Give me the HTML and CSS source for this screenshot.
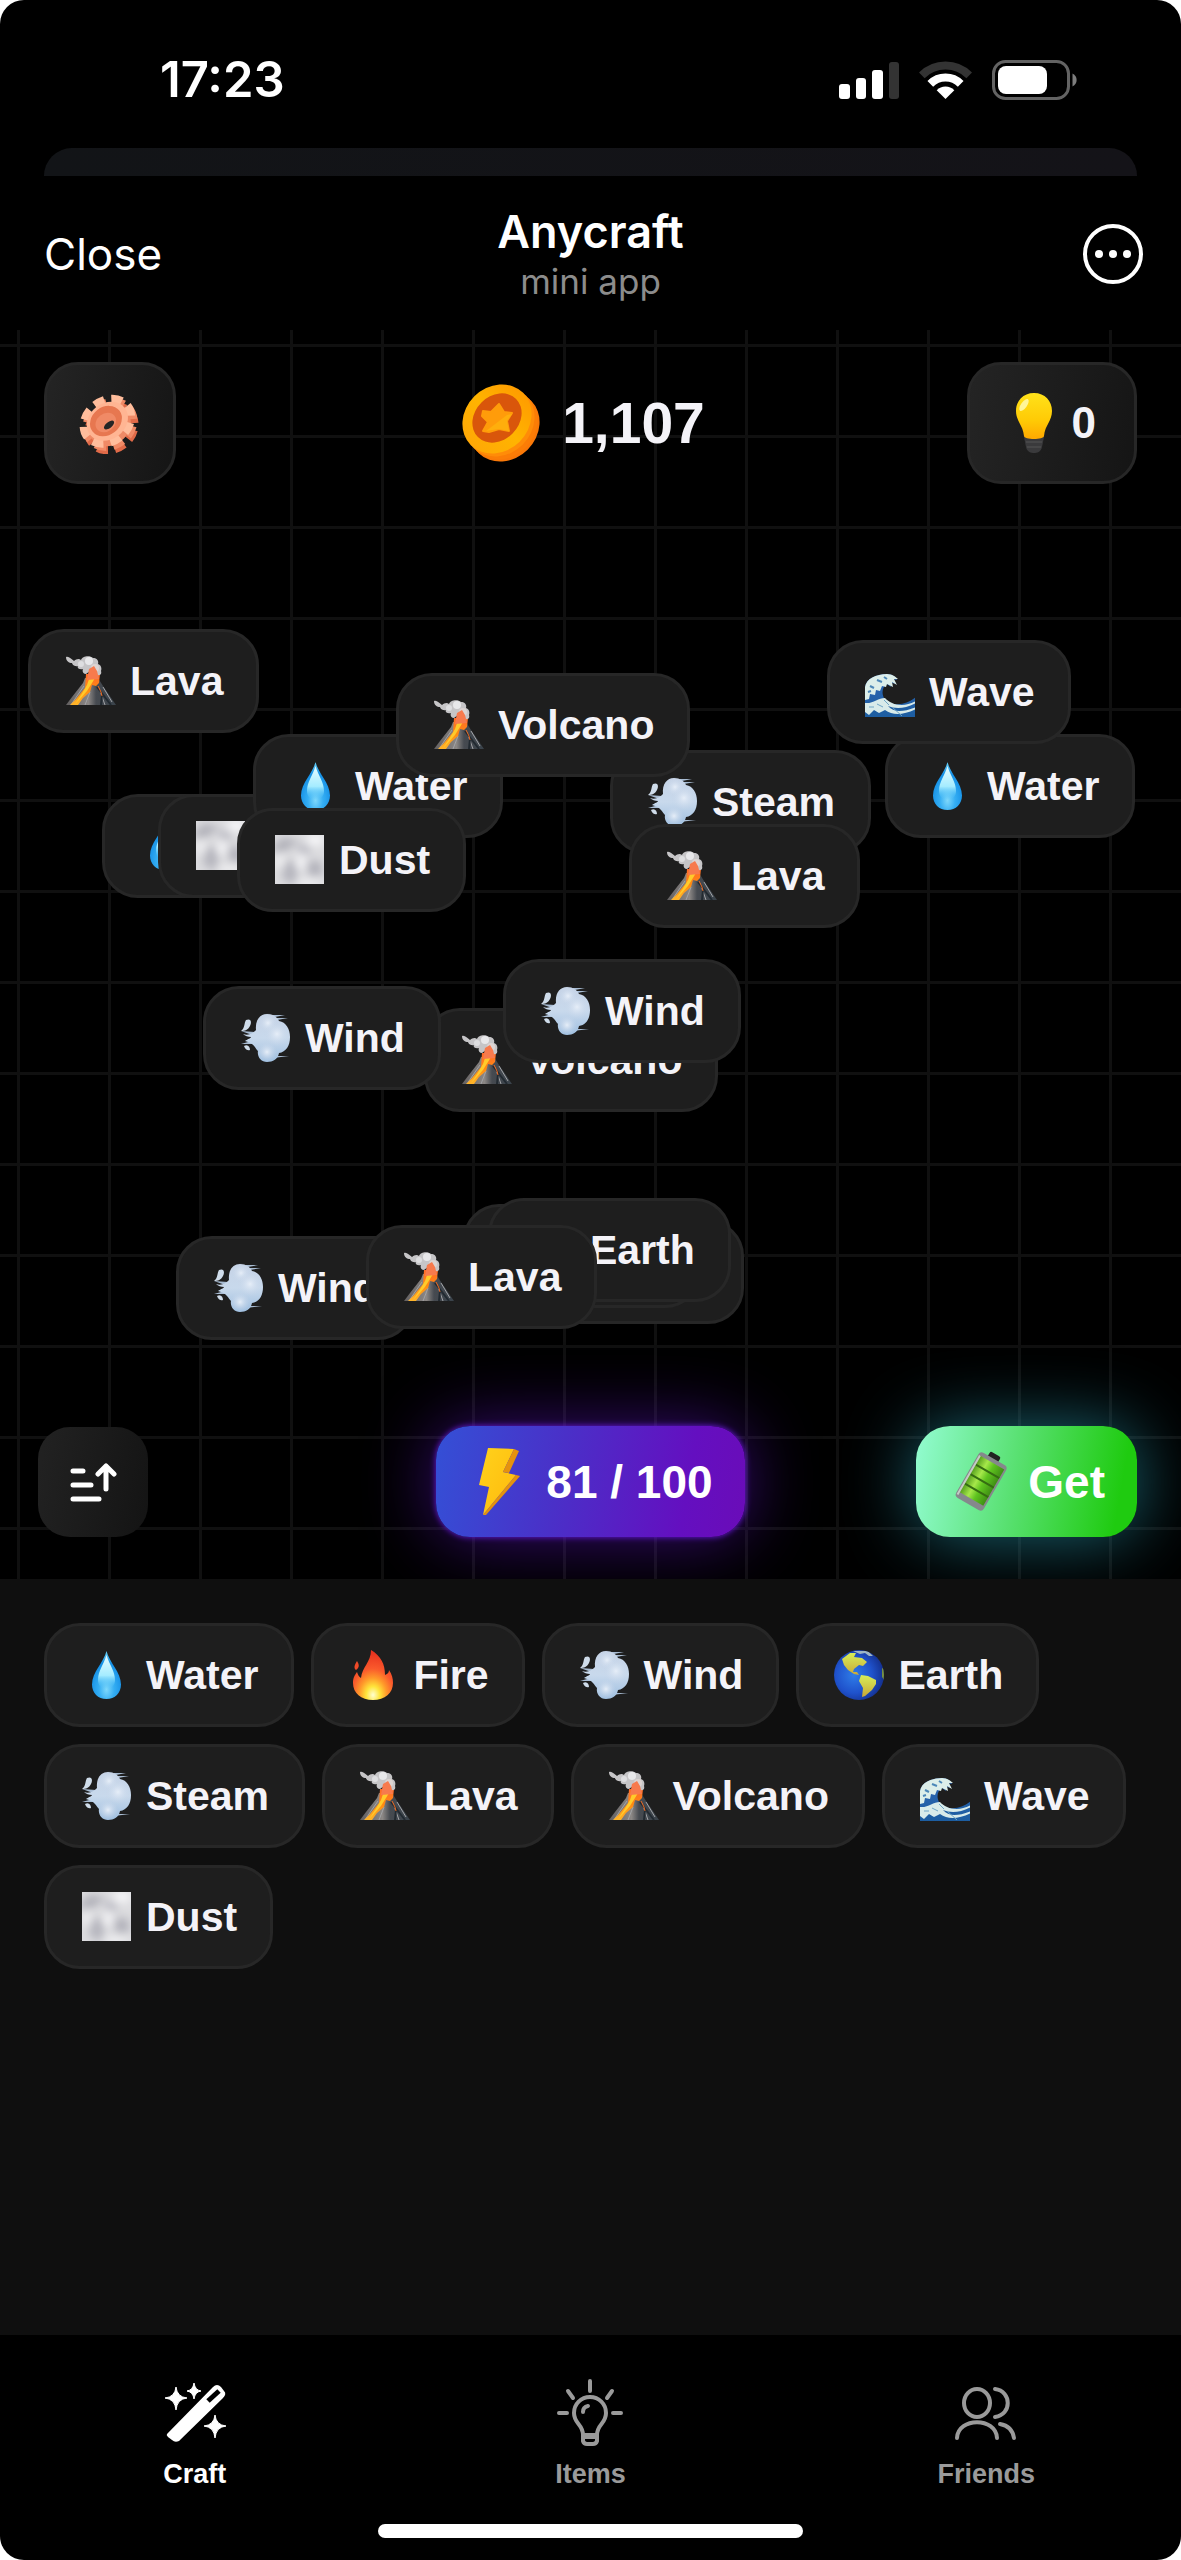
FILE: index.html
```html
<!DOCTYPE html>
<html lang="en">
<head>
<meta charset="utf-8">
<meta name="viewport" content="width=device-width, initial-scale=1">
<title>Anycraft</title>
<link rel="stylesheet" href="styles.css">
</head>
<body>
<svg class="sprite" aria-hidden="true">
  <defs>
    <radialGradient id="g-drop" cx=".5" cy=".8" r=".75">
      <stop offset="0" stop-color="#7fd8fb"/><stop offset=".35" stop-color="#35aef3"/><stop offset=".75" stop-color="#1590e6"/><stop offset="1" stop-color="#5cc8f5"/>
    </radialGradient>
    <linearGradient id="g-shine" x1="0" y1="0" x2="0" y2="1">
      <stop offset="0" stop-color="#e9fdff"/><stop offset=".6" stop-color="#a5ecff"/><stop offset="1" stop-color="#4fc0f7" stop-opacity="0"/>
    </linearGradient>
    <radialGradient id="g-fire" cx=".5" cy=".9" r=".85">
      <stop offset="0" stop-color="#ffffd0"/><stop offset=".2" stop-color="#ffe53b"/><stop offset=".4" stop-color="#ff9a2a"/><stop offset=".62" stop-color="#fa5a2c"/><stop offset="1" stop-color="#e8331f"/>
    </radialGradient>
    <linearGradient id="g-cloud" x1="0" y1="0" x2="0" y2="1">
      <stop offset="0" stop-color="#c6d3e6"/><stop offset=".5" stop-color="#c8d9ec"/><stop offset="1" stop-color="#9fbfe0"/>
    </linearGradient>
    <radialGradient id="g-puff"><stop offset="0" stop-color="#e6eef8"/><stop offset="1" stop-color="#c3d3e8" stop-opacity="0"/></radialGradient>
    <radialGradient id="g-sea" cx=".4" cy=".5" r=".6">
      <stop offset="0" stop-color="#2f7de8"/><stop offset=".6" stop-color="#1f52cc"/><stop offset="1" stop-color="#14308f"/>
    </radialGradient>
    <linearGradient id="g-land" x1="0" y1="0" x2="0" y2="1"><stop offset="0" stop-color="#d7ee58"/><stop offset="1" stop-color="#c8a838"/></linearGradient>
    <linearGradient id="g-rock" x1="0" y1="0" x2="1" y2="0"><stop offset="0" stop-color="#625f60"/><stop offset=".45" stop-color="#8b8785"/><stop offset=".6" stop-color="#464a50"/><stop offset="1" stop-color="#39424a"/></linearGradient>
    <linearGradient id="g-lava" x1="0" y1="0" x2="0" y2="1"><stop offset="0" stop-color="#ff6a2a"/><stop offset=".5" stop-color="#ff8a10"/><stop offset="1" stop-color="#ffb52a"/></linearGradient>
    <linearGradient id="g-wave" x1="0" y1="0" x2="0" y2="1"><stop offset="0" stop-color="#2e66b5"/><stop offset="1" stop-color="#1c5da0"/></linearGradient>
    <linearGradient id="g-bulb" x1="0" y1="0" x2="0" y2="1"><stop offset="0" stop-color="#ffe21a"/><stop offset=".6" stop-color="#ffca05"/><stop offset="1" stop-color="#ffa800"/></linearGradient>
    <linearGradient id="g-coin" x1="0" y1="0" x2="1" y2="0"><stop offset="0" stop-color="#ffa806"/><stop offset=".5" stop-color="#ffb400"/><stop offset="1" stop-color="#ff9c00"/></linearGradient>
    <linearGradient id="g-bolt" x1="0" y1="0" x2="1" y2="1"><stop offset="0" stop-color="#ffd21c"/><stop offset="1" stop-color="#ffb90c"/></linearGradient>
    <linearGradient id="g-cell" x1="0" y1="0" x2="1" y2="0"><stop offset="0" stop-color="#4f9a1a"/><stop offset=".35" stop-color="#a6e84a"/><stop offset=".6" stop-color="#5fc41f"/><stop offset="1" stop-color="#3f8f14"/></linearGradient>
    <filter id="f-soft" x="-20%" y="-20%" width="140%" height="140%"><feGaussianBlur stdDeviation="4"/></filter>
    <clipPath id="c-tile"><rect x="0" y="0" width="49" height="49"/></clipPath>
    <clipPath id="c-globe"><circle cx="25" cy="25" r="25"/></clipPath>
  </defs>

  <symbol id="water" viewBox="0 0 50 50">
    <path d="M24.500 1C27 12 39 22 39 34.500C39 43 33 49 24.500 49S10 43 10 34.500C10 22 22 12 24.500 1Z" fill="url(#g-drop)"/>
    <path d="M24.500 5C27 14 33 21 33 30C33 36 29 39 24.500 39S16 36 16 30C16 21 22 14 24.500 5Z" fill="url(#g-shine)"/>
  </symbol>
  <symbol id="fire" viewBox="0 0 50 50">
    <path d="M22 0C32 6 36 14 36 25C39 24 40 22 40 20C43 24 44 29 44 33C44 43 36 50 24 50C12 50 4 43 4 33C4 27 6 25 8 22C9 25 10 27 12 28C13 17 22 12 22 0Z" fill="url(#g-fire)"/>
    <path d="M8 11C10 14 11 17 7 20C4 18 6 14 8 11Z" fill="#f04a28"/>
  </symbol>
  <symbol id="wind" viewBox="0 0 50 50">
    <path d="M30 2L44 2L34 4ZM34 5L47 5L36 7ZM34 43L48 43L32 45ZM0 18L14 19L14 23ZM0 31L14 27L16 31Z" fill="#a9bdd4"/>
    <path d="M5 7C10 5 11 9 9 13C7 17 4 18 0 18C4 15 3 10 5 7ZM3 33C7 31 9 34 9 37C5 38 4 35 3 33Z" fill="#cfdcea"/>
    <path d="M2 21C8 23 12 20 15 17C14 7 19 1 26 1C32 1 36 4 38 8C45 9 49 16 49 24C49 33 45 39 38 40C37 46 32 49 26 49C20 49 16 44 17 38C14 35 13 30 4 28C7 26 10 25 10 24C7 24 4 23 2 21Z" fill="url(#g-cloud)"/>
    <circle cx="27" cy="10" r="10" fill="url(#g-puff)"/><circle cx="36" cy="21" r="13" fill="url(#g-puff)"/><circle cx="26" cy="39" r="10" fill="url(#g-puff)"/>
  </symbol>
  <symbol id="earth" viewBox="0 0 50 50">
    <circle cx="25" cy="25" r="25" fill="url(#g-sea)"/>
    <g clip-path="url(#c-globe)">
      <path d="M8 9L16 3L22 3L20 7L28 8L33 12L29 16L25 15L20 19L19 22L23 22L25 25L20 24L14 20L10 15Z" fill="url(#g-land)"/>
      <path d="M19 1L34 1L39 6L35 6L31 3L26 4Z" fill="#9db4c4"/>
      <path d="M27 25L34 26L42 30L42 34L38 40L31 46L28 47L29 38L25 31Z" fill="url(#g-land)"/>
      <path d="M48 18L51 20L50 30L48 27Z" fill="#77913f"/>
    </g>
  </symbol>
  <symbol id="volcano" viewBox="0 0 50 50">
    <path d="M0 49L6 41L17 27L19 22L32 22L37 30L50 49Z" fill="url(#g-rock)"/>
    <path d="M18 30L11 40L5 49M37 31L46 46M33 32L39 49M24 36L19 49" stroke="#a2a3a6" stroke-width="1" fill="none"/>
    <path d="M31 31L45 49M36 39L35 49" stroke="#222a31" stroke-width="2" fill="none"/>
    <path d="M20 18L34 18L33 27L30 30L26 29L24 36L17 42L12 49L4 49L10 43L14 38L19 32Z" fill="url(#g-lava)"/>
    <path d="M24 20L29 22L26 27L21 35L14 43L9 48L15 39L21 29Z" fill="#ffcb2b"/>
    <path d="M32 30L35 36L36 40" stroke="#f06a20" stroke-width="1" fill="none"/>
    <path d="M0 1C3 0 5 3 8 5C10 3 13 2 15 4C16 0 24-1 27 2C31 2 33 5 32 8C35 9 36 12 35 15C36 18 34 20 31 19L28 12L20 18C17 18 16 15 17 13C12 14 11 11 12 10C8 11 6 8 6 7C3 7 0 5 0 1Z" fill="#c6c5c7"/>
    <circle cx="23" cy="5" r="4" fill="#e8e8ea"/><circle cx="15" cy="8" r="3" fill="#dedee0"/><circle cx="29" cy="12" r="4" fill="#dcd4d2"/>
    <path d="M23 13L28 10L31 15L33 23L21 24Z" fill="#f77a4d"/>
  </symbol>
  <symbol id="wave" viewBox="0 0 50 50">
    <path d="M0 20C1 12 11 7 22 7C27 7 31 10 32 13L27 12L30 17L25 15L26 20L22 17C18 19 16 25 19 31C26 40 41 39 51 30L51 50L0 50Z" fill="url(#g-wave)"/>
    <path d="M0 20C1 12 11 7 22 7C27 7 31 10 33 12L29 12L32 18L27 15L28 20L22 17L21 20L17 19L15 24L11 23L10 28L5 27L4 32L0 33Z" fill="#dceeea"/>
    <path d="M12 13L17 15M5 19L9 21M19 10L22 12M3 25L6 24" stroke="#4c87b8" stroke-width="2"/>
    <path d="M0 36C8 37 13 31 20 31C26 38 39 41 51 34L51 36C40 42 30 42 23 39C29 46 38 45 51 40L51 42C39 48 28 49 20 43L14 46L9 43L4 48L0 45Z" fill="#d8ebea"/>
    <path d="M19 33L24 38M12 37L18 40M4 40L9 40M27 40L37 49" stroke="#6fa6c6" stroke-width="1"/>
  </symbol>
  <symbol id="dust" viewBox="0 0 50 50">
    <g clip-path="url(#c-tile)">
      <rect width="49" height="49" fill="#dcdcdf"/>
      <g filter="url(#f-soft)">
        <path d="M-4 14L8 2L24 6L14 14L4 20Z" fill="#b2b2ba"/><path d="M6 30L18 24L24 36L18 50L8 44Z" fill="#b6b6be"/><path d="M30 26L46 26L48 40L34 42Z" fill="#b4b4bc"/><path d="M24 8L36 12L34 20L22 20Z" fill="#bcbcc4"/>
        <ellipse cx="40" cy="5" rx="9" ry="6" fill="#f6f6f8"/><ellipse cx="26" cy="27" rx="6" ry="9" fill="#f2f2f4"/><ellipse cx="5" cy="26" rx="5" ry="9" fill="#eeeef0"/><ellipse cx="34" cy="48" rx="12" ry="5" fill="#eeeef0"/>
      </g>
    </g>
  </symbol>
</svg>

<div class="phone">
  <div class="status">
    <span class="clock">17:23</span>
    <div class="signals">
      <svg width="60" height="38" viewBox="0 0 60 38"><rect x="0" y="23" width="11" height="15" rx="3" fill="#fff"/><rect x="17" y="17" width="10" height="21" rx="3" fill="#fff"/><rect x="33" y="9" width="11" height="29" rx="3" fill="#fff"/><rect x="50" y="1" width="10" height="37" rx="3" fill="#333"/></svg>
      <svg width="53" height="38" viewBox="0 0 53 38" fill="none"><path d="M2.800 14.300A33.500 33.500 0 0 1 50.200 14.300" stroke="#333" stroke-width="8"/><path d="M11.300 22.800A21.500 21.500 0 0 1 41.700 22.800" stroke="#fff" stroke-width="8"/><path d="M26.500 38L17.700 29.200A12.500 12.500 0 0 1 35.300 29.200Z" fill="#fff"/></svg>
      <svg width="85" height="40" viewBox="0 0 85 40"><rect x="1.500" y="1.500" width="75" height="37" rx="12" fill="none" stroke="#636363" stroke-width="3"/><rect x="6" y="6" width="49" height="28" rx="8" fill="#fff"/><path d="M80.500 13.500C86 16 86 24 80.500 26.500Z" fill="#7d7d7d"/></svg>
    </div>
  </div>
  <div class="sheet-behind"></div>

  <header class="header">
    <button class="close" type="button">Close</button>
    <div class="titles"><h1>Anycraft</h1><p>mini app</p></div>
    <button class="more" type="button" aria-label="More"><svg width="60" height="60" viewBox="0 0 60 60"><circle cx="30" cy="30" r="28" fill="none" stroke="#fff" stroke-width="4"/><circle cx="16" cy="30" r="4" fill="#fff"/><circle cx="30" cy="30" r="4" fill="#fff"/><circle cx="44" cy="30" r="4" fill="#fff"/></svg></button>
  </header>

  <main class="canvas">
    <div class="topbar">
      <button class="tile" type="button" aria-label="Settings">
        <svg width="62" height="62" viewBox="0 0 62 62" fill="none">
          <g transform="rotate(-38 31 31)">
            <ellipse cx="29" cy="36" rx="23" ry="19" pathLength="160" stroke="#e06a48" stroke-width="11" stroke-dasharray="12 8"/>
            <ellipse cx="29" cy="34" rx="22" ry="18" fill="#ee8a66"/>
            <ellipse cx="30" cy="32" rx="24" ry="20" pathLength="160" stroke="#f08a66" stroke-width="10" stroke-dasharray="12 8"/>
            <ellipse cx="30" cy="28" rx="25" ry="20" pathLength="160" stroke="#ffbd9c" stroke-width="9" stroke-dasharray="12 8"/>
            <ellipse cx="30" cy="28" rx="22" ry="18" fill="#ffb593"/>
            <ellipse cx="29" cy="27" rx="17" ry="14" fill="#e77750"/>
            <ellipse cx="28" cy="28" rx="11" ry="9" fill="#f08a66"/>
            <ellipse cx="29" cy="32" rx="6" ry="3" fill="#252525"/>
          </g>
        </svg>
      </button>
      <div class="coins">
        <svg width="78" height="78" viewBox="0 0 78 78">
          <ellipse cx="43" cy="43" rx="37" ry="32" transform="rotate(-45 43 43)" fill="#f97808"/>
          <ellipse cx="41" cy="41" rx="37" ry="32" transform="rotate(-45 41 41)" fill="#fb7d06"/>
          <ellipse cx="38" cy="38" rx="37" ry="32" transform="rotate(-45 38 38)" fill="#ff8c08"/>
          <ellipse cx="35" cy="35" rx="37" ry="32" transform="rotate(-45 35 35)" fill="url(#g-coin)"/>
          <ellipse cx="35" cy="34" rx="27" ry="22" transform="rotate(-45 35 34)" fill="#d9560b"/>
          <path d="M37 20L42 28L50 29L45 37L47 47L37 45L27 48L21 47L26 38L20 32L21 27L29 28Z" fill="#ff9c0a" stroke="#ff9c0a" stroke-width="2" stroke-linejoin="round"/>
          <path d="M45 31L50 30L45 37L47 47L37 45L24 47Z" fill="#ffae0c"/>
        </svg>
        <span>1,107</span>
      </div>
      <button class="tile hints" type="button" aria-label="Hints: 0">
        <svg width="60" height="60" viewBox="0 0 60 60"><path d="M20 44H40L38 54C37 59 33 60 30 60S23 59 22 54Z" fill="#3a3a3c"/><path d="M22 49H38M23 54H37" stroke="#555" stroke-width="1"/><path d="M30 0C41 0 48 8 48 18C48 28 41 32 40 43C40 47 20 47 20 43C19 32 12 28 12 18C12 8 19 0 30 0Z" fill="url(#g-bulb)"/><ellipse cx="20" cy="12" rx="3" ry="7" transform="rotate(35 20 12)" fill="#fff59a"/></svg>
        <span>0</span>
      </button>
    </div>

    <div class="pieces">
      <button class="chip" type="button" style="left:28px;top:629px"><svg><use href="#volcano"/></svg>Lava</button>
      <button class="chip" type="button" style="left:102px;top:794px"><svg><use href="#water"/></svg>Water</button>
      <button class="chip" type="button" style="left:158px;top:794px"><svg><use href="#dust"/></svg>Dust</button>
      <button class="chip" type="button" style="left:253px;top:734px"><svg><use href="#water"/></svg>Water</button>
      <button class="chip" type="button" style="left:237px;top:808px"><svg><use href="#dust"/></svg>Dust</button>
      <button class="chip" type="button" style="left:610px;top:750px"><svg><use href="#wind"/></svg>Steam</button>
      <button class="chip" type="button" style="left:396px;top:673px"><svg><use href="#volcano"/></svg>Volcano</button>
      <button class="chip" type="button" style="left:629px;top:824px"><svg><use href="#volcano"/></svg>Lava</button>
      <button class="chip" type="button" style="left:885px;top:734px"><svg><use href="#water"/></svg>Water</button>
      <button class="chip" type="button" style="left:827px;top:640px"><svg><use href="#wave"/></svg>Wave</button>
      <button class="chip" type="button" style="left:424px;top:1008px"><svg><use href="#volcano"/></svg>Volcano</button>
      <button class="chip" type="button" style="left:203px;top:986px"><svg><use href="#wind"/></svg>Wind</button>
      <button class="chip" type="button" style="left:503px;top:959px"><svg><use href="#wind"/></svg>Wind</button>
      <button class="chip" type="button" style="left:501px;top:1220px"><svg><use href="#earth"/></svg>Earth</button>
      <button class="chip" type="button" style="left:463px;top:1204px"><svg><use href="#wind"/></svg>Wind</button>
      <button class="chip" type="button" style="left:488px;top:1198px"><svg><use href="#earth"/></svg>Earth</button>
      <button class="chip" type="button" style="left:176px;top:1236px"><svg><use href="#wind"/></svg>Wind</button>
      <button class="chip" type="button" style="left:366px;top:1225px"><svg><use href="#volcano"/></svg>Lava</button>
    </div>

    <div class="bottombar">
      <button class="sort" type="button" aria-label="Sort"><svg width="48" height="42" viewBox="0 0 48 42" fill="none" stroke="#fff" stroke-width="5" stroke-linecap="round" stroke-linejoin="round"><path d="M4 10H14M4 24H22M4 38H30"/><path d="M37 28V5M29 13L37 5L45 13"/></svg></button>
      <div class="energy"><svg width="48" height="68" viewBox="0 0 48 68"><path d="M14 0L40 1L29 24L42 27L9 67L15 39L5 37Z" fill="url(#g-bolt)"/><path d="M40 1L45 3L35 25L29 24ZM42 27L46 28L12 67L9 67Z" fill="#e5920e"/></svg><span>81 / 100</span></div>
      <button class="get" type="button"><svg width="60" height="66" viewBox="0 0 60 66"><g transform="rotate(30 30 33)"><rect x="22" y="2" width="12" height="8" rx="2" fill="#222"/><rect x="13" y="7" width="32" height="52" rx="4" fill="#85888c"/><rect x="15" y="11" width="28" height="42" fill="url(#g-cell)"/><path d="M15 21H43M15 32H43M15 43H43" stroke="#356d12" stroke-width="2"/><path d="M15 11V56" stroke="#c5cbc5" stroke-width="2"/></g></svg><span>Get</span></button>
    </div>
  </main>

  <section class="palette" aria-label="Elements">
    <button class="chip" type="button"><svg><use href="#water"/></svg>Water</button>
    <button class="chip" type="button"><svg><use href="#fire"/></svg>Fire</button>
    <button class="chip" type="button"><svg><use href="#wind"/></svg>Wind</button>
    <button class="chip" type="button"><svg><use href="#earth"/></svg>Earth</button>
    <button class="chip" type="button"><svg><use href="#wind"/></svg>Steam</button>
    <button class="chip" type="button"><svg><use href="#volcano"/></svg>Lava</button>
    <button class="chip" type="button"><svg><use href="#volcano"/></svg>Volcano</button>
    <button class="chip" type="button"><svg><use href="#wave"/></svg>Wave</button>
    <button class="chip" type="button"><svg><use href="#dust"/></svg>Dust</button>
  </section>

  <footer class="footer">
    <nav class="tabs">
      <a class="tab active" href="#craft"><svg width="66" height="68" viewBox="0 0 66 68"><path d="M5 55L51 8Q55 4 59 8L62 12Q65 15 61 19L17 62Q13 64 10 61L6 58Q4 56 5 55Z" fill="#fff"/><path d="M46 22L57 12" stroke="#000" stroke-width="5"/><path d="M14 8Q15 18 25 19Q15 20 14 31Q13 20 3 19Q13 18 14 8ZM32 4Q33 11 39 12Q33 13 32 20Q31 13 25 12Q31 11 32 4ZM53 36Q54 46 64 47Q54 48 53 59Q52 48 42 47Q52 46 53 36Z" fill="#fff" stroke="#fff" stroke-width="1"/></svg><span>Craft</span></a>
      <a class="tab" href="#items"><svg width="66" height="68" viewBox="0 0 66 68" fill="none" stroke="#9a9a9a" stroke-width="4" stroke-linecap="round"><path d="M26 56C26 45 17 45 17 34C17 25 24 18 33 18S49 25 49 34C49 45 40 45 40 56ZM26 56V62Q27 65 30 65H36Q39 65 40 62V56M26 58H40M26 33Q26 28 31 27"/><path d="M33 2V12M11 12L16 19M55 12L50 19M2 34H10M56 34H64"/></svg><span>Items</span></a>
      <a class="tab" href="#friends"><svg width="66" height="68" viewBox="0 0 66 68" fill="none" stroke="#9a9a9a" stroke-width="4" stroke-linecap="round"><ellipse cx="24" cy="24" rx="13" ry="14"/><path d="M42 10C59 12 59 36 42 38M4 59C5 38 43 38 44 59M47 45Q59 47 61 59"/></svg><span>Friends</span></a>
    </nav>
    <div class="home"></div>
  </footer>
</div>
</body>
</html>
```

FILE: styles.css
```css
* { box-sizing: border-box; }
html { background: #fff; }
body { margin: 0; overflow-x: hidden; font-family: "Liberation Sans", Arial, sans-serif; color: #f4f3f8; }
button { font: inherit; color: inherit; margin: 0; padding: 0; border: 0; background: none; cursor: pointer; }
svg { display: block; flex: none; }
.sprite { position: absolute; width: 0; height: 0; }

.phone {
  position: relative;
  display: flex;
  flex-direction: column;
  min-height: 100vh;
  background: #000;
  border-radius: 24px;
  overflow: hidden;
}

/* System status bar */
.status {
  display: flex;
  justify-content: space-between;
  align-items: center;
  height: 148px;
  padding: 12px 104px 0 160px;
  color: #fff;
}
.clock { font: 600 49px/58px Inter, sans-serif; }
.signals { display: flex; align-items: center; gap: 20px; }
.sheet-behind {
  height: 28px;
  margin: 0 44px;
  border-radius: 28px 28px 0 0;
  background: linear-gradient(90deg, #121417, #141318);
}

/* Mini app header */
.header {
  display: grid;
  grid-template-columns: 1fr auto 1fr;
  align-items: center;
  height: 154px;
  padding: 2px 38px 0;
  font-family: Inter, sans-serif;
  color: #fff;
}
.close { justify-self: start; padding-left: 6px; font-size: 44px; line-height: 56px; }
.titles { text-align: center; }
.titles h1 { margin: 0; font-size: 45px; line-height: 54px; font-weight: 600; }
.titles p { margin: 0; font-size: 35px; line-height: 44px; color: #8c8c8c; }
.more { justify-self: end; }

/* Crafting canvas */
.canvas {
  flex: 1;
  display: flex;
  flex-direction: column;
  justify-content: space-between;
  min-height: 1240px;
  padding: 32px 44px 42px;
  background-color: #000;
  background-image:
    linear-gradient(90deg, #101010 3px, transparent 3px),
    linear-gradient(#101010 3px, transparent 3px);
  background-size: 91px 91px;
  background-position: 17px 14px;
}
.topbar {
  display: grid;
  grid-template-columns: 1fr auto 1fr;
  align-items: center;
}
.tile {
  display: flex;
  align-items: center;
  justify-content: center;
  gap: 8px;
  height: 122px;
  min-width: 132px;
  border: 3px solid #272727;
  border-radius: 34px;
  background: linear-gradient(100deg, #242424, #151515);
  font-size: 44px;
  font-weight: 700;
  justify-self: start;
}
.hints { justify-self: end; padding: 0 38px 0 34px; }
.coins { display: flex; align-items: center; gap: 22px; padding-right: 14px; font-size: 57px; font-weight: 700; }

.chip {
  display: flex;
  align-items: center;
  gap: 14px;
  padding: 24px 33px 24px 35px;
  border: 3px solid #272727;
  border-radius: 36px;
  background: #1e1e1e;
  font-size: 41px;
  line-height: 50px;
  font-weight: 700;
  white-space: nowrap;
}
.chip svg { width: 50px; height: 50px; overflow: visible; }
.pieces .chip { position: absolute; }

.bottombar {
  display: grid;
  grid-template-columns: 1fr auto 1fr;
  align-items: center;
  color: #fff;
  font-size: 46px;
  font-weight: 700;
}
.sort {
  display: grid;
  place-items: center;
  width: 110px;
  height: 110px;
  margin-left: -6px;
  border-radius: 32px;
  background: linear-gradient(100deg, #222, #141414);
}
.energy, .get {
  display: flex;
  align-items: center;
  height: 111px;
  border-radius: 34px;
}
.energy {
  gap: 24px;
  padding: 0 32px 0 38px;
  background: linear-gradient(100deg, #3450d6, #4a30c8 40%, #640fc0 80%, #6a0cb8);
  box-shadow: 0 0 70px rgba(106, 22, 220, .55), 0 0 6px #6a1be0;
}
.get {
  justify-self: end;
  gap: 16px;
  padding: 0 32px 0 36px;
  background: linear-gradient(100deg, #93fcd2, #58e070 45%, #1fcb10 90%);
  box-shadow: 0 0 70px rgba(40, 150, 170, .7);
}

/* Palette of discovered elements */
.palette {
  position: relative;
  display: flex;
  flex-wrap: wrap;
  align-content: flex-start;
  gap: 17px;
  min-height: 756px;
  padding: 44px;
  background: #0f0f0f;
}

/* Tabs and home indicator */
.footer { padding-top: 44px; }
.tabs { display: grid; grid-template-columns: repeat(3, 1fr); margin: 0 -3px; }
.tab {
  display: flex;
  flex-direction: column;
  align-items: center;
  gap: 12px;
  color: #9a9a9a;
  font-size: 27px;
  line-height: 30px;
  font-weight: 700;
  text-decoration: none;
}
.tab.active { color: #fff; }
.home { width: 36%; height: 14px; margin: 35px auto 22px; border-radius: 7px; background: #fff; }
```
